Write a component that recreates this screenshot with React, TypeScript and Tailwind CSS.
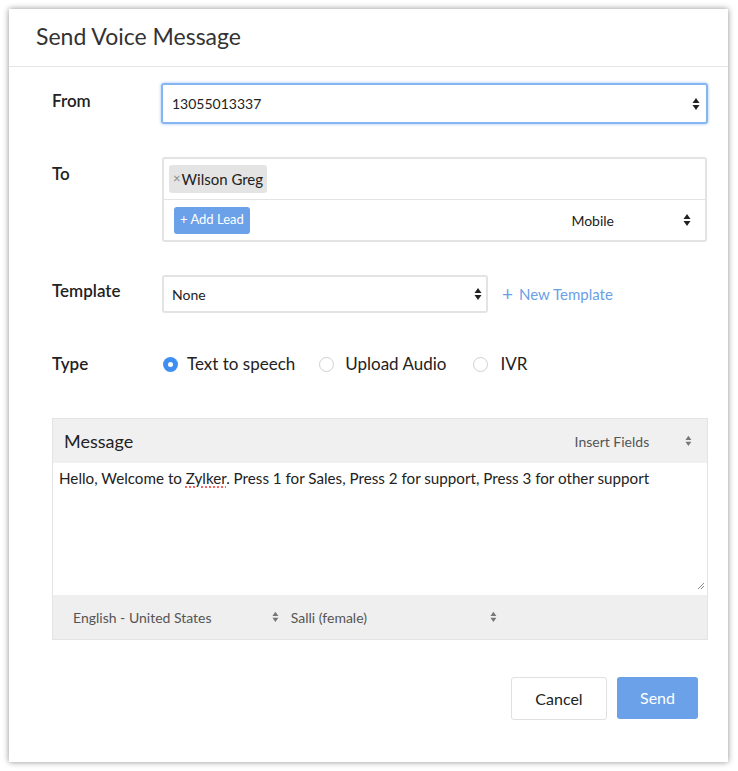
import React from "react";

const Arrows = ({ color = "#222", size = 1 }: { color?: string; size?: number }) => (
  <svg width={8 * size} height={14 * size} viewBox="0 0 8 14" className="shrink-0">
    <path d="M4 1 L7.5 6 H0.5 Z" fill={color} />
    <path d="M4 13 L7.5 8 H0.5 Z" fill={color} />
  </svg>
);

const Radio = ({ checked }: { checked?: boolean }) =>
  checked ? (
    <span className="inline-flex shrink-0 w-[15px] h-[15px] rounded-full bg-[#3f8ef2] items-center justify-center">
      <span className="block w-[5px] h-[5px] rounded-full bg-white" />
    </span>
  ) : (
    <span className="inline-block shrink-0 w-[15px] h-[15px] rounded-full border border-[#cfcfcf] bg-white" />
  );

export default function App() {
  return (
    <div
      className="w-[738px] h-[771px] bg-white relative"
      style={{ fontFamily: "Lato, 'Open Sans', Arial, sans-serif" }}
    >
      <div className="absolute left-[9px] top-[9px] w-[719px] h-[753px] bg-white shadow-[0_0_6px_rgba(0,0,0,0.45)] flex flex-col text-[#222]">
        <div className="h-[58px] border-b border-[#e6e6e6] flex items-center pl-[27px] pb-[3px]">
          <span className="text-[23px] text-[#333]">Send Voice Message</span>
        </div>
        <div className="pl-[43px] pr-[20px] flex flex-col">
          {/* From */}
          <div className="flex mt-[16px]">
            <div className="w-[109px] pt-[5px] text-[17px] font-semibold">From</div>
            <div className="w-[547px] h-[41px] rounded-[3px] border-2 border-[#86b6f2] shadow-[0_0_3px_rgba(80,150,240,0.6)] flex items-center pl-[9px] pr-[6px] justify-between">
              <span className="text-[14px]">13055013337</span>
              <Arrows />
            </div>
          </div>
          {/* To */}
          <div className="flex mt-[33px]">
            <div className="w-[110px] pt-[4px] text-[17px] font-semibold">To</div>
            <div className="w-[545px] h-[85px] rounded-[3px] border-2 border-[#e3e3e3] flex flex-col">
              <div className="h-[41px] border-b border-[#e3e3e3] flex items-center pl-[5px]">
                <span className="h-[28px] px-[4px] rounded-[3px] bg-[#e4e4e4] flex items-center text-[15px]">
                  <span className="text-[#888] text-[13px] mr-[1px]">×</span>Wilson Greg
                </span>
              </div>
              <div className="flex-1 flex items-center pl-[10px] pr-[14px]">
                <span className="h-[27px] px-[6px] rounded-[3px] bg-[#6aa1e8] text-white text-[13px] flex items-center">
                  + Add Lead
                </span>
                <span className="ml-auto text-[14px] mr-[69px]">Mobile</span>
                <Arrows />
              </div>
            </div>
          </div>
          {/* Template */}
          <div className="flex mt-[33px] items-center">
            <div className="w-[110px] text-[17px] font-semibold -mt-[6px]">Template</div>
            <div className="w-[326px] h-[38px] rounded-[3px] border-2 border-[#e3e3e3] flex items-center pl-[8px] pr-[4px] justify-between">
              <span className="text-[14px]">None</span>
              <Arrows />
            </div>
            <span className="ml-[14px] text-[#6a9fe6] text-[15px] flex items-center">
              <span className="text-[19px] mr-[6px] leading-none -mt-[2px]">+</span>New Template
            </span>
          </div>
          {/* Type */}
          <div className="flex mt-[41px] items-center h-[20px]">
            <div className="w-[111px] text-[17px] font-semibold">Type</div>
            <div className="flex items-center text-[17px]">
              <Radio checked />
              <span className="ml-[9px]">Text to speech</span>
              <span className="ml-[24px] inline-flex"><Radio /></span>
              <span className="ml-[11px]">Upload Audio</span>
              <span className="ml-[27px] inline-flex"><Radio /></span>
              <span className="ml-[12px]">IVR</span>
            </div>
          </div>
          {/* Message */}
          <div className="mt-[44px] w-[656px] border border-[#e3e3e3] flex flex-col">
            <div className="h-[44px] bg-[#f0f0f0] flex items-center pl-[11px] pr-[15px]">
              <span className="text-[18px]">Message</span>
              <span className="ml-auto text-[14px] text-[#555] mr-[36px]">Insert Fields</span>
              <Arrows color="#777" size={0.85} />
            </div>
            <div className="h-[132px] bg-white relative pl-[6px] pt-[4px] text-[15.2px]">
              Hello, Welcome to{" "}
              <span className="underline decoration-dotted decoration-[#e33] underline-offset-[3px]">Zylker</span>. Press 1 for
              Sales, Press 2 for support, Press 3 for other support
              <svg className="absolute right-[2px] bottom-[5px]" width="8" height="8" viewBox="0 0 8 8">
                <path d="M1 7 L7 1 M4 7 L7 4" stroke="#888" strokeWidth="1" />
              </svg>
            </div>
            <div className="h-[44px] bg-[#efefef] flex items-center pl-[20px] text-[14px] text-[#555]">
              <span className="w-[199px]">English - United States</span>
              <Arrows color="#777" size={0.85} />
              <span className="ml-[12px] w-[199px]">Salli (female)</span>
              <Arrows color="#777" size={0.85} />
            </div>
          </div>
          {/* Buttons */}
          <div className="flex justify-end mt-[37px] mr-[10px] gap-[10px]">
            <span className="w-[96px] h-[43px] rounded-[3px] border border-[#e0e0e0] flex items-center justify-center text-[16px]">
              Cancel
            </span>
            <span className="w-[81px] h-[42px] rounded-[3px] bg-[#6aa1e8] text-white flex items-center justify-center text-[16px]">
              Send
            </span>
          </div>
        </div>
      </div>
    </div>
  );
}
